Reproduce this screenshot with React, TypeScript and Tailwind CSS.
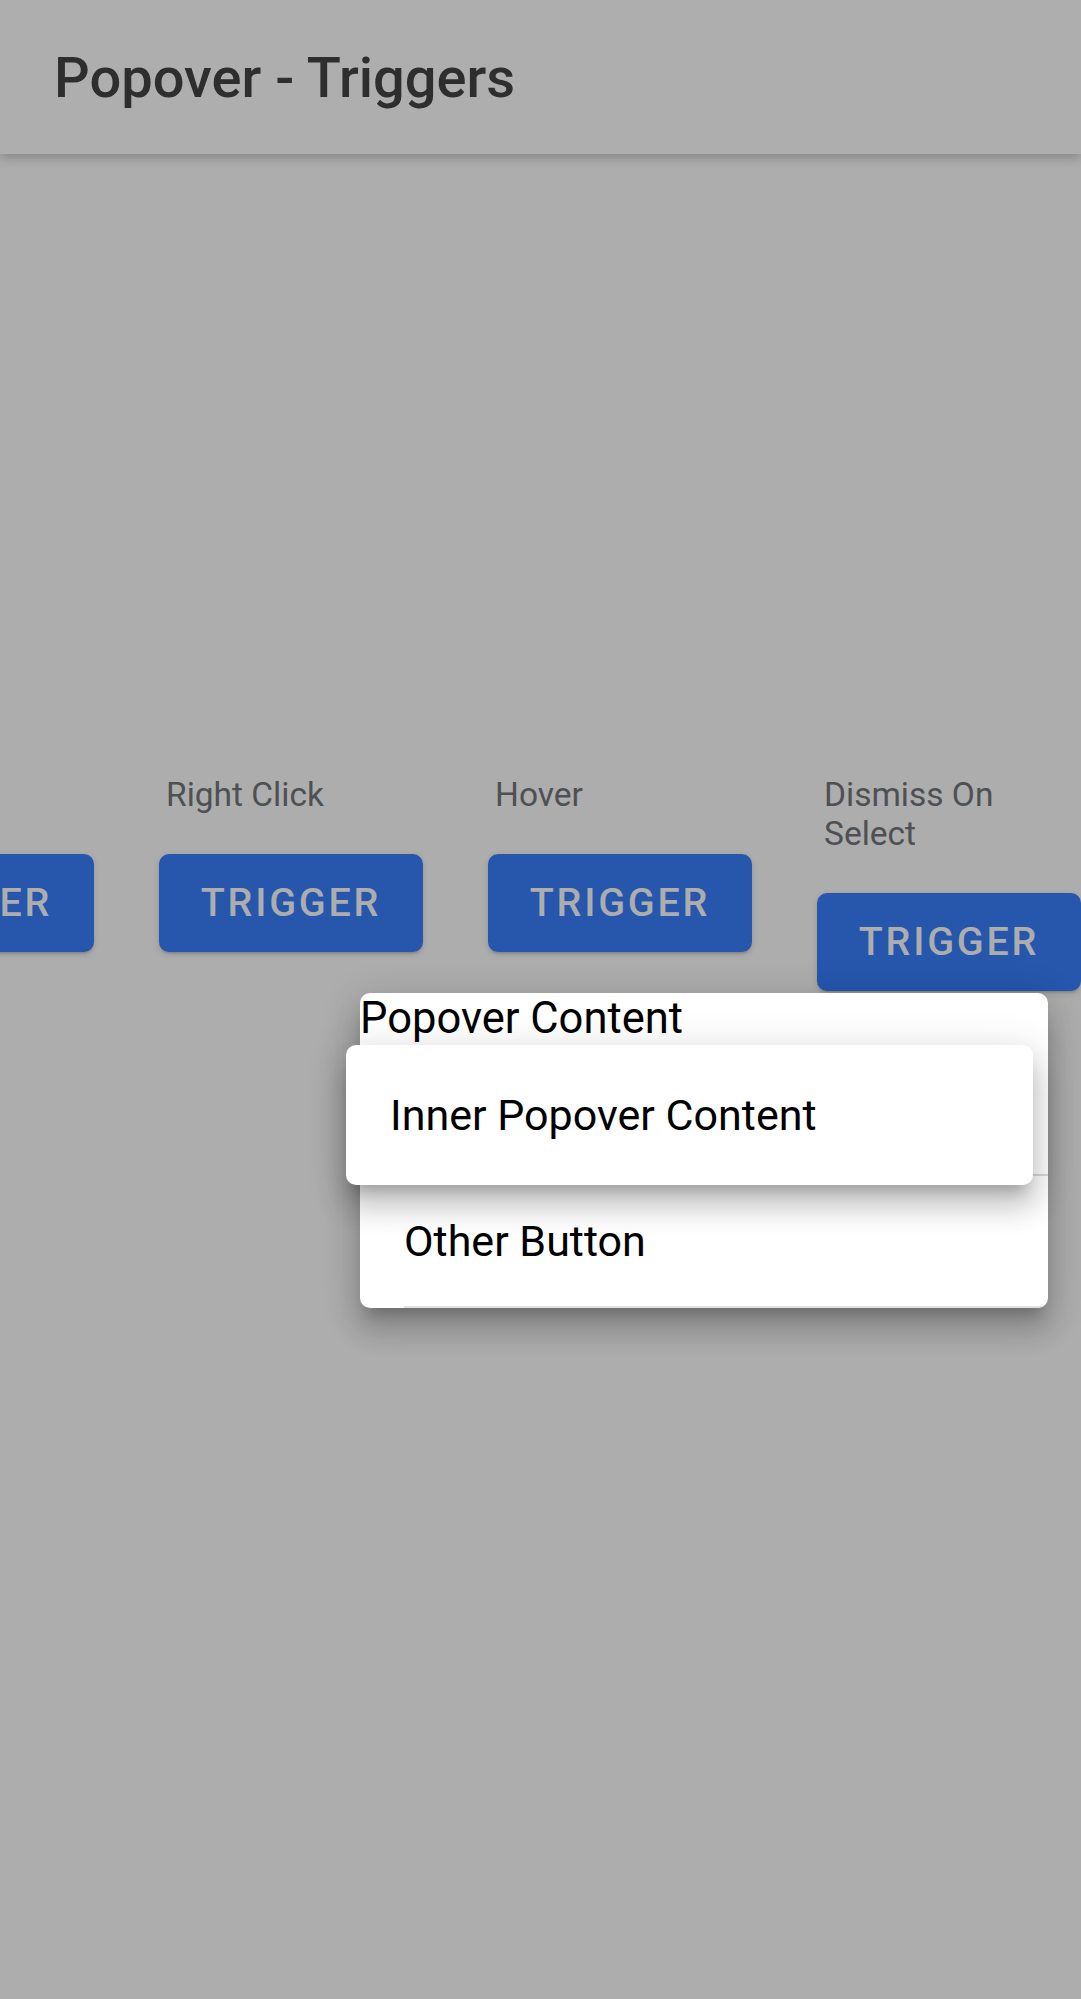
import React from 'react';

const triggers = [
  { id: 'click', label: 'Left Click' },
  { id: 'context', label: 'Right Click' },
  { id: 'hover', label: 'Hover' },
  { id: 'dismiss', label: 'Dismiss On Select' },
];

const App: React.FC = () => {
  return (
    <div className="relative w-[1081px] h-[1999px] overflow-hidden bg-[#adadad] font-['Roboto',sans-serif]">
      <header className="relative z-10 h-[154px] flex items-center pl-[54px] pt-[2px] bg-[#aeaeae] shadow-[0_4px_10px_rgba(0,0,0,0.22)]">
        <h1 className="text-[56px] font-medium text-[#2e2e2e] leading-none">Popover - Triggers</h1>
      </header>

      <div className="flex items-start gap-[65px] ml-[-170px] pt-[621px]">
        {triggers.map(t => (
          <div key={t.id} className="w-[264px] shrink-0 flex flex-col">
            <p className="w-[230px] pl-[7px] text-[33.5px] leading-[39px] text-[#4e5053]">{t.label}</p>
            <button className="mt-[40px] w-[264px] h-[98px] rounded-[10px] bg-[#2657ad] text-[39.5px] font-medium uppercase tracking-[0.07em] text-[#adadad] shadow-[0_3px_3px_-2px_rgba(0,0,0,0.2),0_2px_6px_0_rgba(0,0,0,0.14)]">
              Trigger
            </button>
          </div>
        ))}
      </div>

      {/* outer popover */}
      <div className="absolute left-[360px] top-[993px] w-[688px] h-[315px] bg-white rounded-[10px] overflow-hidden shadow-[0_14px_14px_-8px_rgba(0,0,0,0.2),0_22px_28px_3px_rgba(0,0,0,0.14),0_8px_38px_6px_rgba(0,0,0,0.12)]">
        <div className="h-[51px] text-[43.5px] leading-[51px] text-black">Popover Content</div>
        <div className="h-[132px] border-b-2 border-[#dadada]"></div>
        <div className="h-[132px] pl-[44px]">
          <div className="h-full flex items-center border-b-2 border-[#e2e2e2] text-[43px] text-black">Other Button</div>
        </div>
      </div>

      {/* inner popover */}
      <div className="absolute left-[346px] top-[1045px] w-[687px] h-[140px] bg-white rounded-[10px] flex items-center pl-[44px] text-[43px] text-black shadow-[0_14px_14px_-8px_rgba(0,0,0,0.2),0_22px_28px_3px_rgba(0,0,0,0.14),0_8px_38px_6px_rgba(0,0,0,0.12)]">
        Inner Popover Content
      </div>
    </div>
  );
};

export default App;
